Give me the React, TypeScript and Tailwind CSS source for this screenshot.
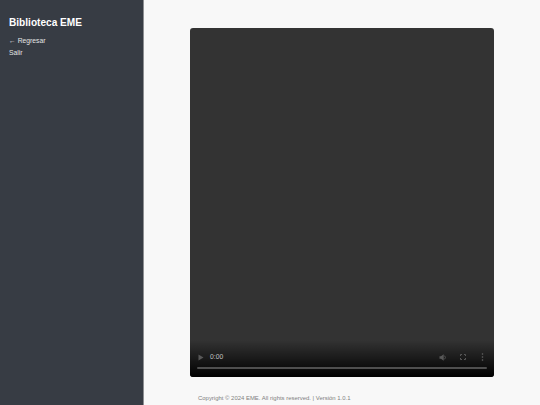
import React from 'react';

const VideoControls: React.FC = () => (
  <div className="mt-auto h-[37px] bg-gradient-to-b from-transparent to-black px-[7px] pt-[11px]">
    <div className="flex h-[12px] items-center">
      <svg width="6" height="7" viewBox="0 0 6 7" className="ml-[1px]">
        <path d="M0.5 0.5 L5.5 3.5 L0.5 6.5 Z" fill="#585858" />
      </svg>
      <span className="ml-[6px] text-[6.75px] leading-none text-[#c4c4c4]">0:00</span>
      <div className="ml-auto flex items-center">
        <svg width="8" height="7" viewBox="0 0 8 7">
          <path d="M0.5 2.2 H2 L4.7 0.2 V6.8 L2 4.8 H0.5 Z" fill="#585858" />
          <path d="M5.6 1.7 Q7.2 3.5 5.6 5.3" stroke="#585858" strokeWidth="0.9" fill="none" />
        </svg>
        <svg width="6" height="6" viewBox="0 0 6 6" className="ml-[13px]">
          <path d="M0.5 2 V0.5 H2 M4 0.5 H5.5 V2 M5.5 4 V5.5 H4 M2 5.5 H0.5 V4" stroke="#585858" strokeWidth="1" fill="none" />
        </svg>
        <svg width="3" height="8" viewBox="0 0 3 8" className="ml-[15px] mr-[3px]">
          <circle cx="1.5" cy="1" r="0.8" fill="#666666" />
          <circle cx="1.5" cy="4" r="0.8" fill="#666666" />
          <circle cx="1.5" cy="7" r="0.8" fill="#666666" />
        </svg>
      </div>
    </div>
    <div className="mt-[4px] h-[2px] rounded-full bg-[#4f4f4f]" />
  </div>
);

const App: React.FC = () => {
  return (
    <div className="flex h-[405px] w-[540px] overflow-hidden bg-[#f8f8f8] font-['Liberation_Sans',Arial,sans-serif]">
      <aside className="w-[144px] shrink-0 border-r border-[#8d8f92] bg-[#373c44] px-[9px] pt-[15px] text-white">
        <h1 className="text-[10.125px] leading-[15px] font-bold">Biblioteca EME</h1>
        <nav className="mt-[5.5px] flex flex-col gap-[2px] text-[6.75px] leading-[10px] text-[#e4e4e4]">
          <a>← Regresar</a>
          <a>Salir</a>
        </nav>
      </aside>
      <main className="flex flex-1 flex-col items-center pt-[28px]">
        <div className="w-[304px]">
          <div className="flex h-[349px] flex-col overflow-hidden rounded-[3px] bg-[#333333]">
            <VideoControls />
          </div>
          <footer className="mt-[17px] px-[8px] text-[5.95px] leading-[8px] text-[#808080]">
            Copyright © 2024 EME. All rights reserved. | Versión 1.0.1
          </footer>
        </div>
      </main>
    </div>
  );
};

export default App;
